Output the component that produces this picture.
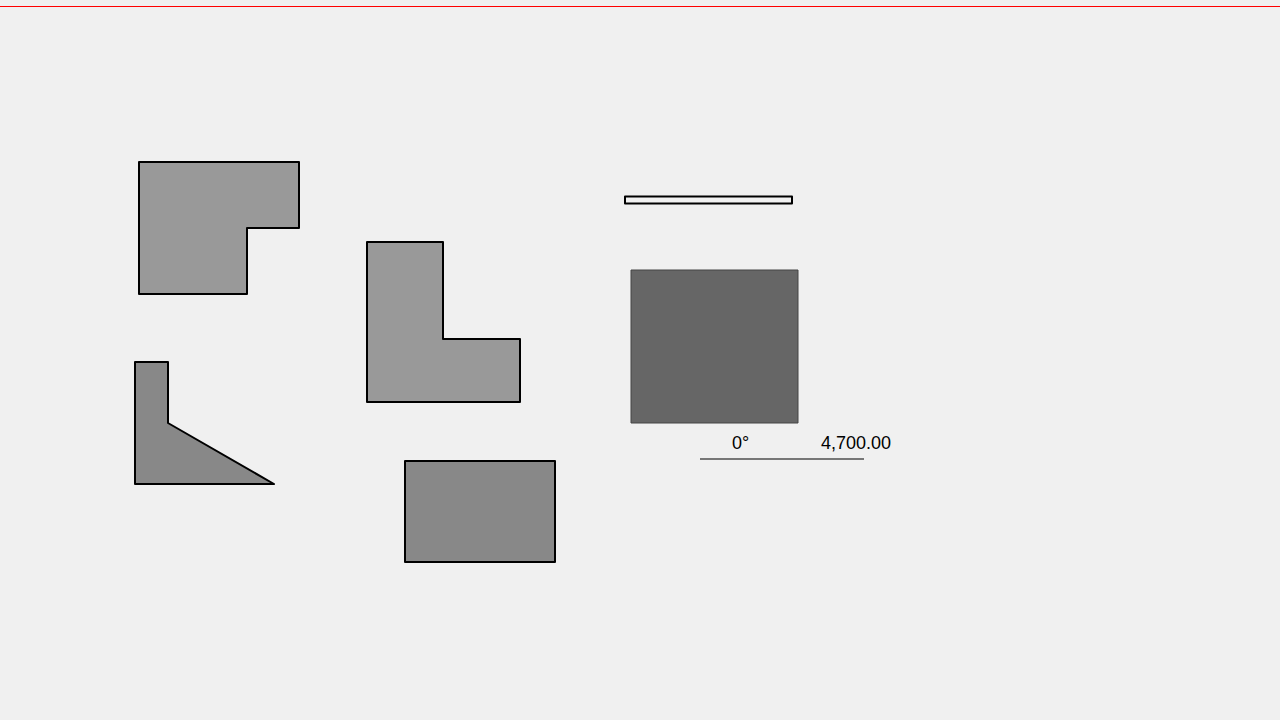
import React from "react";

type Shape = { points: string; fill: string; stroke?: string; width?: number };

const shapes: Shape[] = [
  { points: "139,162 299,162 299,228 247,228 247,294 139,294", fill: "#999999" },
  { points: "135,362 168,362 168,423 274,484 135,484", fill: "#888888" },
  { points: "367,242 443,242 443,339 520,339 520,402 367,402", fill: "#999999" },
  { points: "405,461 555,461 555,562 405,562", fill: "#888888" },
  { points: "625,196.5 792,196.5 792,203.5 625,203.5", fill: "#f2f2f2" },
  { points: "631,270 798,270 798,423 631,423", fill: "#666666", stroke: "#444444", width: 1 },
];

export default function App() {
  return (
    <div className="relative w-[1280px] h-[720px] overflow-hidden bg-[#f0f0f0] font-['Liberation_Sans',Arial,sans-serif]">
      <div className="h-[6px]" />
      <div className="h-px bg-[#ff0000]" />

      <svg className="absolute left-0 top-0" width={1280} height={720} viewBox="0 0 1280 720">
        {shapes.map((s, i) => (
          <polygon
            key={i}
            points={s.points}
            fill={s.fill}
            stroke={s.stroke ?? "#000000"}
            strokeWidth={s.width ?? 2}
            strokeLinejoin="round"
          />
        ))}
        <line x1={700} y1={459} x2={864} y2={459} stroke="#777777" strokeWidth={2} />
      </svg>

      <span className="absolute left-[732px] top-[434px] text-[18px] leading-none text-black">0°</span>
      <span className="absolute left-[821px] top-[434px] text-[18px] leading-none text-black">4,700.00</span>
    </div>
  );
}
